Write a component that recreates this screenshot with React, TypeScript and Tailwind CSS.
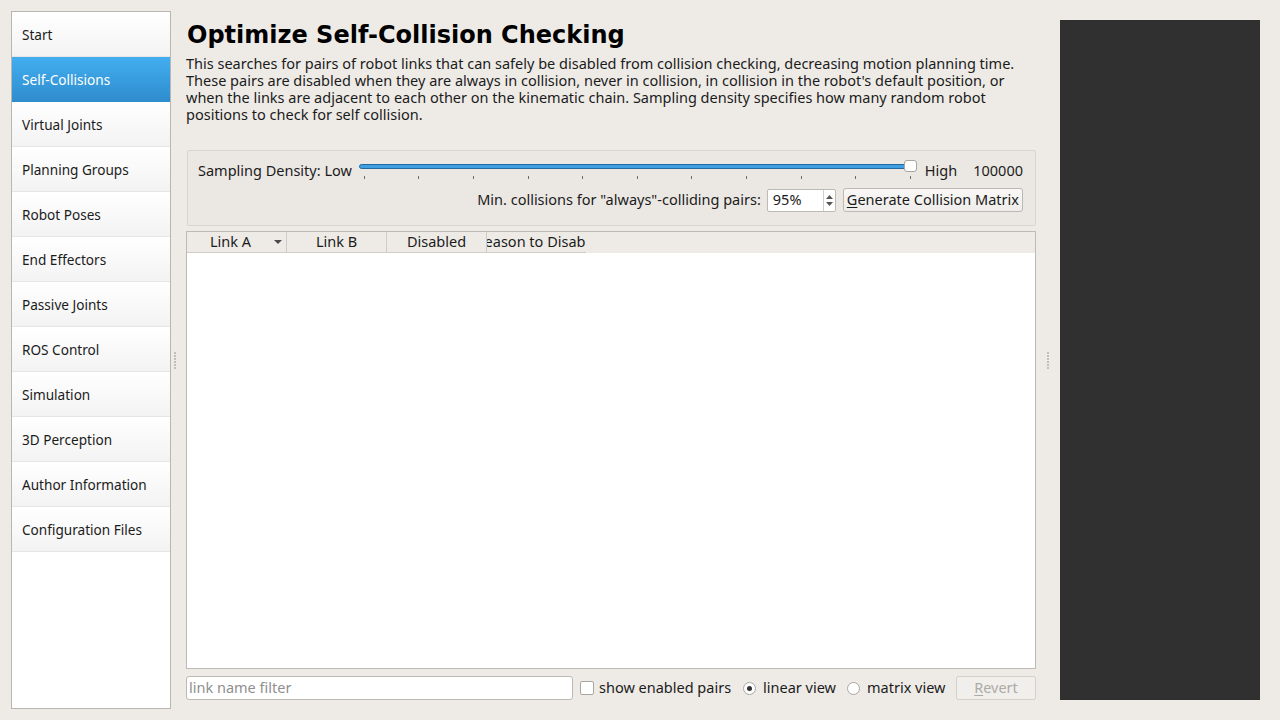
import React from "react";

const navItems = [
  "Start",
  "Self-Collisions",
  "Virtual Joints",
  "Planning Groups",
  "Robot Poses",
  "End Effectors",
  "Passive Joints",
  "ROS Control",
  "Simulation",
  "3D Perception",
  "Author Information",
  "Configuration Files",
];

const ticks = Array.from({ length: 11 });

function SplitterDots() {
  return (
    <div className="flex flex-col gap-[1px]">
      {[0, 1, 2, 3, 4, 5].map((i) => (
        <div key={i} className="w-[2px] h-[2px] bg-[#c2beb9]" />
      ))}
    </div>
  );
}

export default function App() {
  return (
    <div
      className="w-[1280px] h-[720px] bg-[#eeebe7] text-[#1b1b1b] flex overflow-hidden text-[14.5px]"
      style={{ fontFamily: '"Noto Sans", "Open Sans", sans-serif' }}
    >
      {/* sidebar */}
      <div className="ml-[11px] mt-[11px] w-[160px] h-[698px] bg-white border border-[#bab6b2] flex flex-col text-[13.6px]">
        {navItems.map((item) => {
          const active = item === "Self-Collisions";
          return (
            <div
              key={item}
              className={
                active
                  ? "h-[45px] flex items-center pl-[10px] pt-[2px] text-white bg-gradient-to-b from-[#42aef0] to-[#2f8ccd]"
                  : "h-[45px] flex items-center pl-[10px] pt-[2px] bg-gradient-to-b from-white to-[#f3f3f3] border-b border-[#e8e6e4]"
              }
            >
              {item}
            </div>
          );
        })}
      </div>

      {/* left splitter */}
      <div className="w-[15px] flex items-center pl-[3px]">
        <SplitterDots />
      </div>

      {/* main */}
      <div className="w-[850px] flex flex-col pt-[20px]">
        <h1
          className="text-[24px] font-bold leading-[31px] text-black pl-[1px]"
          style={{ fontFamily: '"DejaVu Sans", sans-serif' }}
        >
          Optimize Self-Collision Checking
        </h1>
        <p className="mt-[4px] leading-[17px] w-[845px]">
          This searches for pairs of robot links that can safely be disabled from collision checking, decreasing motion
          planning time. These pairs are disabled when they are always in collision, never in collision, in collision in
          the robot's default position, or when the links are adjacent to each other on the kinematic chain. Sampling
          density specifies how many random robot positions to check for self collision.
        </p>

        {/* settings group */}
        <div className="mt-[27px] ml-[1px] h-[76px] border border-[#d8d4cf] bg-[#ebe8e4] rounded-[2px] flex flex-col pl-[10px] pr-[12px] pt-[6px]">
          <div className="flex items-center h-[28px]">
            <span className="whitespace-nowrap">Sampling Density: Low</span>
            <div className="relative ml-[7px] flex-1 h-[28px]">
              <div className="absolute left-0 right-[2px] top-[7px] h-[5px] rounded-full bg-[#3d9fe0] border border-[#2468a0]" />
              <div className="absolute right-0 top-[3px] w-[13px] h-[12px] rounded-[3px] bg-white border border-[#a9a6a2]" />
              <div className="absolute left-[5px] right-[6px] top-[19px] flex justify-between">
                {ticks.map((_, i) => (
                  <div key={i} className="w-px h-[3px] bg-[#6b6b6b]" />
                ))}
              </div>
            </div>
            <span className="ml-[8px]">High</span>
            <span className="ml-[16px]">100000</span>
          </div>
          <div className="flex items-center justify-end h-[30px]">
            <span className="whitespace-nowrap">Min. collisions for "always"-colliding pairs:</span>
            <div className="ml-[6px] w-[69px] h-[23px] bg-white border border-[#bdb9b4] rounded-[2px] flex items-center">
              <span className="pl-[5px] flex-1">95%</span>
              <div className="w-[12px] h-full border-l border-[#d2cec9] flex flex-col items-center justify-center gap-[3px]">
                <svg width="7" height="4" viewBox="0 0 7 4">
                  <path d="M0 4 L3.5 0 L7 4 Z" fill="#555" />
                </svg>
                <svg width="7" height="4" viewBox="0 0 7 4">
                  <path d="M0 0 L3.5 4 L7 0 Z" fill="#555" />
                </svg>
              </div>
            </div>
            <button className="ml-[7px] h-[24px] px-[3px] bg-gradient-to-b from-[#f9f8f7] to-[#efedea] border border-[#bdb9b4] rounded-[3px] whitespace-nowrap">
              <span className="underline underline-offset-2">G</span>enerate Collision Matrix
            </button>
          </div>
        </div>

        {/* table */}
        <div className="mt-[5px] h-[438px] border border-[#bdb9b4] bg-white flex flex-col">
          <div className="h-[21px] bg-[#eeebe7] flex">
            <div className="w-[100px] border-r border-b border-[#cfcbc6] flex items-center justify-center pr-[12px] relative">
              <span>Link A</span>
              <svg className="absolute right-[4px] top-[8px]" width="8" height="4" viewBox="0 0 8 4">
                <path d="M0 0 L4 4 L8 0 Z" fill="#4a4a4a" />
              </svg>
            </div>
            <div className="w-[100px] border-r border-b border-[#cfcbc6] flex items-center justify-center">
              Link B
            </div>
            <div className="w-[100px] border-r border-b border-[#cfcbc6] flex items-center justify-center">
              Disabled
            </div>
            <div className="w-[99px] border-b border-[#cfcbc6] flex items-center justify-center overflow-hidden whitespace-nowrap">
              <span className="shrink-0">Reason to Disable</span>
            </div>
          </div>
          <div className="flex-1 bg-white" />
        </div>

        {/* bottom controls */}
        <div className="mt-[7px] h-[24px] flex items-center">
          <div className="w-[387px] h-[24px] bg-white border border-[#bdb9b4] rounded-[3px] flex items-center pl-[2px] text-[#8f8f8f]">
            link name filter
          </div>
          <div className="ml-[7px] w-[14px] h-[14px] bg-white border border-[#a9a6a2] rounded-[2px]" />
          <span className="ml-[5px]">show enabled pairs</span>
          <div className="ml-[12px] w-[13px] h-[13px] rounded-full bg-white border border-[#a9a6a2] flex items-center justify-center">
            <div className="w-[5px] h-[5px] rounded-full bg-[#333]" />
          </div>
          <span className="ml-[7px]">linear view</span>
          <div className="ml-[11px] w-[13px] h-[13px] rounded-full bg-white border border-[#a9a6a2]" />
          <span className="ml-[7px]">matrix view</span>
          <button className="ml-auto w-[80px] h-[24px] border border-[#d3cfca] rounded-[3px] bg-[#f1efec] text-[#adaaa6]">
            <span className="underline underline-offset-2">R</span>evert
          </button>
        </div>
      </div>

      {/* right splitter */}
      <div className="w-[24px] flex items-center justify-center">
        <SplitterDots />
      </div>

      {/* dark panel */}
      <div className="mt-[20px] w-[200px] h-[680px] bg-[#303030]" />
    </div>
  );
}
